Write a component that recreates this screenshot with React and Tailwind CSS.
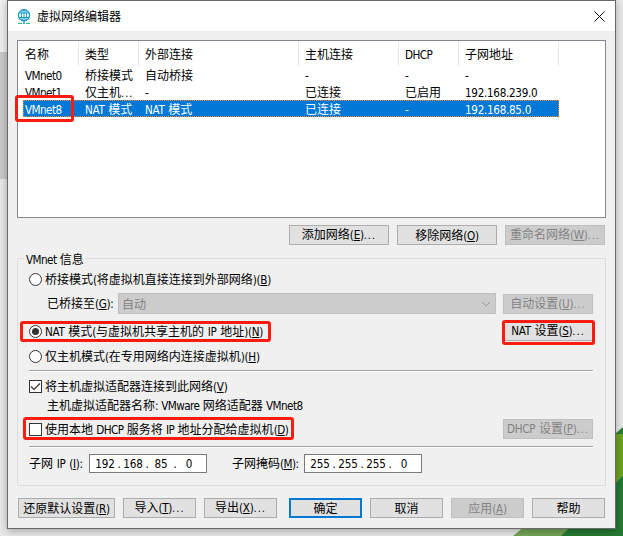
import React from "react";

function Latin({ text }) {
  const m = text.match(/^(.*\()([A-Z])(\).*)$/);
  if (!m) return text;
  return <>{m[1]}<u className="underline-offset-1">{m[2]}</u>{m[3]}</>;
}

function T({ children, className = "", tight }) {
  const parts = String(children).split(/(\.\.\.|[\x20-\x7e]+?(?=\.\.\.)|[\x20-\x7e]+)/).filter(Boolean);
  return (
    <span className={`whitespace-pre ${className}`}>
      {parts.map((p, i) => {
        if (p === "...") return <span key={i} className="font-['DejaVu_Sans_Condensed','DejaVu_Sans'] text-[11px] tracking-[1px]">...</span>;
        if (!/^[\x20-\x7e]/.test(p)) return <span key={i}>{p}</span>;
        return (
          <span key={i} className={`font-['DejaVu_Sans_Condensed','DejaVu_Sans'] text-[11.6px] [font-stretch:condensed] ${tight ? "tracking-[-0.55px] [word-spacing:0.5px]" : "tracking-[-0.3px] [word-spacing:0.7px]"}`}>
            <Latin text={p} />
          </span>
        );
      })}
    </span>
  );
}

function Button({ children, className = "", disabled, primary }) {
  const tone = disabled
    ? "border border-[#bfbfbf] bg-[#cccccc] text-[#838383]"
    : primary
      ? "border-2 border-[#0078d7] bg-[#e1e1e1]"
      : "border border-[#adadad] bg-[#e1e1e1]";
  return (
    <button className={`flex h-5 shrink-0 items-center justify-center ${tone} ${className}`}>
      <T>{children}</T>
    </button>
  );
}

function Radio({ checked }) {
  return (
    <span className="flex size-[13px] shrink-0 items-center justify-center rounded-full border border-[#333] bg-white">
      {checked && <span className="size-[7px] rounded-full bg-[#333]" />}
    </span>
  );
}

function Check({ checked }) {
  return (
    <span className="flex size-[13px] shrink-0 items-center justify-center border border-[#333] bg-white">
      {checked && (
        <svg className="size-[11px]" viewBox="0 0 11 11" fill="none" stroke="#333" strokeWidth="1.2">
          <path d="M1 5.5 4 8.5 10 2.5" />
        </svg>
      )}
    </span>
  );
}

const headers = ["名称", "类型", "外部连接", "主机连接", "DHCP", "子网地址"];
const rows = [
  ["VMnet0", "桥接模式", "自动桥接", "-", "-", "-"],
  ["VMnet1", "仅主机...", "-", "已连接", "已启用", "192.168.239.0"],
  ["VMnet8", "NAT 模式", "NAT 模式", "已连接", "-", "192.168.85.0"],
];

function Table() {
  return (
    <div className="h-[178px] w-[589px] border border-[#828790] bg-white">
      <div className="mt-px grid h-6 grid-cols-[61px_60px_160px_100px_60px_100px]">
        {headers.map((h, i) => (
          <div key={h} className={`flex items-center border-r border-[#e5e5e5] ${i ? "pl-[6px]" : "pl-[7px]"}`}><T tight>{h}</T></div>
        ))}
      </div>
      {rows.map((r, n) => (
        <div
          key={r[0]}
          className={`ml-[5px] grid h-[17px] w-[536px] grid-cols-[60px_60px_160px_100px_60px_96px] ${n === 2 ? "bg-[#0078d7] text-white outline-1 -outline-offset-1 outline-dotted outline-[#ff8728]" : ""}`}
        >
          {r.map((c, i) => <div key={i} className="h-[17px] pl-[2px] leading-[17px]"><T tight={i === 0}>{c}</T></div>)}
        </div>
      ))}
    </div>
  );
}

function IpField({ parts }) {
  return (
    <div className="flex h-[19px] w-[118px] items-center border border-[#7a7a7a] bg-white pl-[4px] font-['DejaVu_Sans_Condensed','DejaVu_Sans'] text-[11.6px] tracking-[-0.1px]">
      {parts.map((p, i) => (
        <React.Fragment key={i}>
          <span className="w-[22px] shrink-0 text-center">{p}</span>
          {i < 3 && <span className="w-[6px] shrink-0 text-center">.</span>}
        </React.Fragment>
      ))}
    </div>
  );
}

function Separator() {
  return <div className="ml-[11px] h-[2px] w-[564px] shrink-0 border-b border-white bg-[#a0a0a0]" />;
}

const mark = "pointer-events-none absolute rounded-[3px] border-[3px] border-[#fb1c10]";

export default function App() {
  return (
    <div className="relative h-[536px] w-[623px] overflow-hidden bg-[#e9e9e9] font-['Noto_Sans_CJK_SC',sans-serif] text-[12px] leading-4 text-black">
      <svg className="absolute inset-0" width="623" height="536">
        <path d="M0 0H7V52H0Z" fill="#f0f0f0" />
        <path d="M0 52H7V179H0Z" fill="#cacaca" />
        <path d="M513 536 530 522H623V536Z" fill="#72a656" />
        <path d="M561 536 623 475V536Z" fill="#257a32" />
        <path d="M615 434 623 427V434Z" fill="#2b7c35" />
        <path d="M615 434H623V475L615 483Z" fill="#6ba41e" />
      </svg>
      <main className="relative ml-[7px] flex h-[529px] w-[609px] flex-col border border-[#696969] bg-[#f0f0f0] shadow-[0_2px_8px_rgba(0,0,0,0.3)]">
        <header className="flex h-[30px] shrink-0 items-center bg-white pl-[9px] pr-[10px]">
          <svg className="mr-[6px] h-[15px] w-[14px]" viewBox="0 0 14 15" fill="none" stroke="#1597c8">
            <circle cx="7" cy="6.3" r="5.6" strokeWidth="1.2" />
            <ellipse cx="7" cy="6.3" rx="2.6" ry="5.6" />
            <path d="M2 4H12M2 8.5H12M7 .6V14" />
            <path d="M1 14.3H5M6 14.3H8M9 14.3H13" stroke="#12a08c" />
          </svg>
          <T className="flex-1">虚拟网络编辑器</T>
          <svg className="size-[11px]" viewBox="0 0 11 11" stroke="#111"><path d="M.5.5 10.5 10.5M10.5.5.5 10.5" /></svg>
        </header>
        <div className="pl-[9px] pt-[9px]"><Table /></div>
        <div className="mt-[7px] flex justify-end gap-2 pr-[10px]">
          <Button className="w-[100px]">添加网络(E)...</Button>
          <Button className="w-[100px]">移除网络(O)</Button>
          <Button disabled className="w-[100px]">重命名网络(W)...</Button>
        </div>
        <section className="relative ml-[9px] mt-[13px] flex h-[228px] w-[589px] shrink-0 flex-col border border-[#dcdcdc]">
          <div className="absolute left-[6px] top-[-8px] bg-[#f0f0f0] px-[2px]"><T tight>VMnet 信息</T></div>
          <div className="ml-[11px] mt-[12px] flex h-4 items-center gap-[3px]"><Radio /><T>桥接模式(将虚拟机直接连接到外部网络)(B)</T></div>
          <div className="mt-[6px] flex h-[21px] items-center pl-[29px]">
            <T className="w-[71px]">已桥接至(G):</T>
            <div className="flex h-[21px] w-[378px] items-center justify-between border border-[#bfbfbf] bg-[#cccccc] pl-[3px] pr-1 text-[#838383]">
              <T>自动</T>
              <svg className="h-[6px] w-[10px]" viewBox="0 0 10 6" fill="none" stroke="#999"><path d="m1 1 4 4 4-4" /></svg>
            </div>
            <Button disabled className="ml-[7px] w-[90px]">自动设置(U)...</Button>
          </div>
          <div className="mt-[7px] flex h-5 items-center gap-[3px] pl-[11px]">
            <Radio checked /><T className="flex-1">NAT 模式(与虚拟机共享主机的 IP 地址)(N)</T>
            <Button className="mr-[12px] w-[90px]">NAT 设置(S)...</Button>
          </div>
          <div className="mb-[6px] ml-[11px] mt-[7px] flex h-4 items-center gap-[3px]"><Radio /><T>仅主机模式(在专用网络内连接虚拟机)(H)</T></div>
          <Separator />
          <div className="ml-[11px] mt-[6px] flex h-4 items-center gap-[3px]"><Check checked /><T>将主机虚拟适配器连接到此网络(V)</T></div>
          <div className="ml-[29px] mt-[3px] h-4"><T tight>主机虚拟适配器名称: VMware 网络适配器 VMnet8</T></div>
          <div className="mb-[7px] mt-[6px] flex h-5 items-center gap-[3px] pl-[11px]">
            <Check /><T tight className="flex-1">使用本地 DHCP 服务将 IP 地址分配给虚拟机(D)</T>
            <Button disabled className="mr-[12px] w-[90px]">DHCP 设置(P)...</Button>
          </div>
          <Separator />
          <div className="mt-[6px] flex h-[19px] items-center pl-[11px]">
            <T className="w-[60px]">子网 IP (I):</T>
            <IpField parts={["192", "168", "85", "0"]} />
            <T tight className="ml-[25px] w-[72px]">子网掩码(M):</T>
            <IpField parts={["255", "255", "255", "0"]} />
          </div>
        </section>
        <footer className="mt-[12px] flex pl-[10px]">
          <Button className="w-[97px]">还原默认设置(R)</Button>
          <Button className="ml-2 w-[73px]">导入(T)...</Button>
          <Button className="ml-2 w-[73px]">导出(X)...</Button>
          <Button primary className="ml-[12px] w-[73px]">确定</Button>
          <Button className="ml-2 w-[73px]">取消</Button>
          <Button disabled className="ml-2 w-[73px]">应用(A)</Button>
          <Button className="ml-2 w-[73px]">帮助</Button>
        </footer>
      </main>
      <div className={`${mark} left-[15px] top-[95px] h-[27px] w-[59px]`} />
      <div className={`${mark} left-[20px] top-[321px] h-[21px] w-[251px]`} />
      <div className={`${mark} left-[502px] top-[320px] h-[25px] w-[93px]`} />
      <div className={`${mark} left-[23px] top-[417px] h-[23px] w-[271px]`} />
    </div>
  );
}
